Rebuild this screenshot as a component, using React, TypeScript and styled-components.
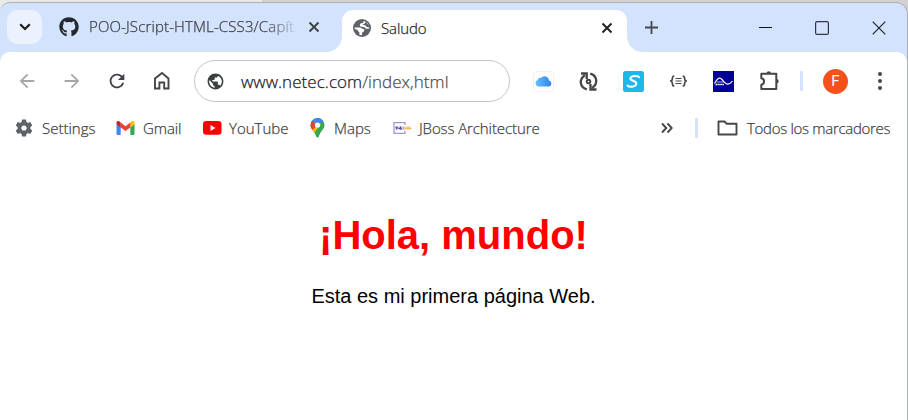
import React from "react";
import styled, { createGlobalStyle } from "styled-components";
import { MdPublic, MdRefresh, MdArrowBack, MdArrowForward } from "react-icons/md";
import { FaGithub } from "react-icons/fa";

const Global = createGlobalStyle`
  * { box-sizing: border-box; }
  html, body { margin: 0; background: #d2d2d2; overflow: hidden; }
  h1, p { margin: 0; }
  svg { display: block; flex: none; }
`;
const uiFont = `"Open Sans", "Noto Sans", sans-serif`;

const Desktop = styled.div`
  height: 420px;
  padding-top: 2px;
  overflow: hidden;
  background: linear-gradient(90deg, #e9e9e9 0 262px, #d2d2d2 262px);
`;
const Window = styled.div`
  height: 426px;
  width: 908px;
  border: 1px solid #aeb0b3;
  border-left-width: 0;
  border-radius: 10px 12px 0 0;
  background: #d3e2fd;
  overflow: hidden;
`;
const TabStrip = styled.div`
  height: 49px;
  padding-top: 7px;
  display: flex;
`;
const SearchTabs = styled.div`
  width: 35px;
  height: 34px;
  margin-left: 7px;
  border-radius: 11px;
  background: #ebf2fe;
  display: grid;
  place-items: center;
`;
const Label = styled.span<{ $size?: number; $track?: number; $color?: string }>`
  font-family: ${uiFont};
  font-weight: 300;
  font-size: ${p => p.$size ?? 15}px;
  letter-spacing: ${p => p.$track ?? 0}px;
  color: ${p => p.$color ?? "#3c3f43"};
  -webkit-text-stroke: 0.25px currentColor;
  line-height: 22px;
  white-space: nowrap;
`;
const IdleTab = styled.div`
  width: 300px;
  height: 34px;
  padding-left: 17px;
  display: flex;
  align-items: center;
`;
const TabTitle = styled.div`
  width: 208px;
  margin: 0 0 2px 10px;
  display: flex;
  mask-image: linear-gradient(90deg, #000 178px, transparent 210px);
`;
const CloseIdle = styled.div`
  margin-left: 11px;
`;
const ActiveTab = styled.div`
  width: 285px;
  height: 42px;
  padding: 0 14px 7px 11px;
  border-radius: 11px 11px 0 0;
  background: #fff;
  display: flex;
  align-items: center;
  gap: 10px;
  position: relative;
  &::before, &::after {
    content: "";
    position: absolute;
    bottom: 0;
    width: 15px;
    height: 15px;
  }
  &::before { left: -15px; background: radial-gradient(circle at 0 0, transparent 14.5px, #fff 15px); }
  &::after { right: -15px; background: radial-gradient(circle at 100% 0, transparent 14.5px, #fff 15px); }
`;
const Spacer = styled.div`
  flex: 1;
`;
const NewTab = styled.div`
  margin: 11px 0 0 18px;
`;
const WindowControls = styled.div`
  display: flex;
  gap: 43px;
  margin: 11px 21px 0 auto;
`;
const Sheet = styled.div`
  height: 375px;
  border-radius: 10px 10px 0 0;
  background: #fff;
`;
const Toolbar = styled.div`
  height: 58px;
  padding-left: 16px;
  display: flex;
  align-items: center;
`;
const NavButtons = styled.div`
  display: flex;
  gap: 23px;
  width: 178px;
`;
const Omnibox = styled.div`
  width: 316px;
  height: 42px;
  border: 1px solid #c3c5c8;
  border-radius: 21px;
  padding-left: 11px;
  display: flex;
  align-items: center;
  gap: 16px;
`;
const Address = styled.div`
  padding-top: 2px;
`;
const Extensions = styled.div`
  margin-left: 11px;
  display: grid;
  grid-template-columns: repeat(6, 45px) 21px 47px 42px;
  place-items: center;
`;
const Divider = styled.div`
  width: 3px;
  height: 20px;
  background: #d3e2fd;
  border-radius: 1px;
`;
const Avatar = styled.div`
  width: 25px;
  height: 25px;
  border-radius: 50%;
  background: #f6511d;
  color: #fff;
  font: 15px/25px Roboto, sans-serif;
  text-align: center;
`;
const Bookmarks = styled.div`
  height: 36px;
  padding: 0 16px 1px 15px;
  display: flex;
  align-items: center;
`;
const Bookmark = styled.div<{ $w: number; $gap?: number }>`
  width: ${p => p.$w}px;
  display: flex;
  align-items: center;
  gap: ${p => p.$gap ?? 8}px;
`;
const Overflow = styled.div`
  width: 34px;
`;
const AllBookmarks = styled.div`
  width: 174px;
  margin-left: 19px;
  display: flex;
  align-items: center;
  gap: 9px;
`;
const Page = styled.main`
  padding-top: 66px;
  display: flex;
  flex-direction: column;
  align-items: center;
  font-family: Arial, "Liberation Sans", sans-serif;
`;
const Heading = styled.h1`
  font-size: 40px;
  line-height: 46px;
  color: #f00;
`;
const Paragraph = styled.p`
  margin-top: 27px;
  font-size: 20px;
  line-height: 23px;
  color: #000;
`;

const ink = "#444649";

const Cross = ({ color, w }: { color: string; w: number }) => (
  <svg width="12" height="12" viewBox="0 0 12 12" stroke={color} strokeWidth={w} fill="none"><path d="M1.5 1.5l9 9m0-9l-9 9" /></svg>
);

const PageGlobe = () => (
  <svg width="18" height="18" viewBox="0 0 18 18">
    <circle cx="9" cy="9" r="9" fill="#5f6368" />
    <path d="M10.500 1.900a7.300 7.300 0 0 1 5.700 6.600l-.2 1.300h-2.300c-1.500 0-1.400-1.700-2.900-1.900l-2.600-.2c-1.500-.3-1.800-2.100-.8-3 .8-.7 2.400-.2 2.900-1.100.3-.5-.1-1.100.2-1.700z" fill="#fff" />
    <path d="M12.600 2.600l3.500 4.200.3 1.600-2.200-.3c-1.200-.2-1-1.300-2.100-1.800l-2.400-.5c.3-1 2.700-.6 2.900-3.200z" fill="#5f6368" />
    <path d="M1.700 8.600h5.100c1.700 0 1.900 1.300 3.400 1.400 1.200.1 1.500 1.200.8 2.200-.5.700-1.600.7-1.800 1.500l-.3 2.500a7.300 7.300 0 0 1-2.600-.5l.1-2.100c0-1-1.300-.9-1.500-1.900-.1-1.100-2.100-1.300-3.200-1.600z" fill="#fff" />
  </svg>
);

const Home = () => (
  <svg width="22" height="22" viewBox="0 0 22 22" fill="none" stroke={ink} strokeWidth="1.900"><path d="M4 18.500V8.500L11 3l6.500 5.500v10h-4.300v-6H8.400v6z" /></svg>
);

const Gear = () => (
  <svg width="18" height="18" viewBox="-9 -9 18 18" fill="#5f6368">
    <circle r="4.500" fill="none" stroke="#5f6368" strokeWidth="3.800" />
    {[0, 60, 120, 180, 240, 300].map(a => <path key={a} d="M-2.600-5l.6-3.400h4l.6 3.400z" transform={`rotate(${a})`} />)}
  </svg>
);

const Gmail = () => (
  <svg width="19" height="14" viewBox="0 0 19 14">
    <path d="M.5 3v9.700q0 1.300 1.300 1.300h2.900V6z" fill="#4285f4" />
    <path d="M14.300 14h2.900q1.300 0 1.300-1.300V3l-4.200 3z" fill="#34a853" />
    <path d="M14.300 1.500V6.500l4.200-3.200V2c0-2-2-2.500-3.300-1.300z" fill="#fbbc04" />
    <path d="M4.700 6.500v-5l4.800 3.700 4.800-3.700v5l-4.800 3.600z" fill="#ea4335" />
    <path d="M.5 2v1.300l4.200 3.200v-5L3.800.7C2.500-.5.5 0 .5 2z" fill="#c5221f" />
  </svg>
);

const YouTube = () => (
  <svg width="19" height="14" viewBox="0 0 19 14"><rect width="18.500" height="13.800" rx="3.300" fill="#f00" /><path d="M7.500 4v6l5-3z" fill="#fff" /></svg>
);

const MapPin = () => (
  <svg width="15" height="20" viewBox="0 0 15 20">
    <defs><clipPath id="pin"><path d="M7.500 0A7 7 0 0 0 .5 7c0 3.500 2.500 5 4.200 8 1.300 2.300 1.400 4.600 2.800 4.600s1.500-2.300 2.800-4.600c1.700-3 4.200-4.500 4.200-8a7 7 0 0 0-7-7z" /></clipPath></defs>
    <g clipPath="url(#pin)">
      <path d="M0 0h15v20H0z" fill="#34a853" />
      <path d="M0 9l6-6 5 3.500L3 16H-1z" fill="#fbbc04" />
      <path d="M-1 1l8.500 6L2 12.500l-3-2z" fill="#ea4335" />
      <path d="M2 2L7.500 7.500 14.500 2 10-2z" fill="#4285f4" />
    </g>
    <circle cx="7.500" cy="7" r="2.600" fill="#fff" />
  </svg>
);

const TekData = () => (
  <svg width="19" height="14" viewBox="0 0 19 14" fill="none">
    <path d="M12 4V1.600H1v10.700h11V9.800" stroke="#9a9bd3" strokeWidth="1.300" />
    <path d="M2.500 7h7" stroke="#b4b5de" strokeWidth="3" />
    <path d="M2.500 6.200h2.200M3.600 6v2.500M5.500 7.500h1.500M7.500 5.500v3M8 7.500l1.300 1" stroke="#4547a3" />
    <path d="M9.800 7h8.500" stroke="#fbd3a4" strokeWidth="2.800" />
    <path d="M10.500 5.700v2.800M12.500 7.500h1.200M15 6v2.500M16.500 7.500h1.500" stroke="#f0a04b" />
  </svg>
);

const Folder = () => (
  <svg width="21" height="16" viewBox="0 0 21 16" fill="none" stroke={ink} strokeWidth="1.900" strokeLinejoin="round"><path d="M1.500 1.500h6l2 2.200h10v10.800h-18z" /></svg>
);

const CloudExt = () => (
  <svg width="21" height="21" viewBox="0 0 21 21">
    <defs><linearGradient id="sky"><stop stopColor="#69c0fb" /><stop offset="1" stopColor="#2b83ef" /></linearGradient></defs>
    <rect x=".5" y=".5" width="20" height="20" rx="3" fill="#fff" stroke="#eef0f2" />
    <path d="M5.500 15.500a3.300 3.300 0 0 1-.8-6.400 2.400 2.400 0 0 1 3.200-2.200 4.500 4.500 0 0 1 8 2.500 3.100 3.100 0 0 1-.2 6.100z" fill="url(#sky)" />
  </svg>
);

const SyncExt = () => (
  <svg width="21" height="21" viewBox="0 0 21 21" fill="none" stroke={ink} strokeWidth="2.300">
    <circle cx="10.500" cy="10.500" r="1.800" strokeWidth="1.900" />
    <path d="M8.800 18.400C1.800 16.500.6 8.500 6.800 4.200M3 2.500h5.700V8M12.200 2.600c7 1.900 8.200 9.900 2 14.200M18.500 18.500h-6V13" />
  </svg>
);

const ScriptExt = () => (
  <svg width="21" height="21" viewBox="0 0 21 21" fill="none"><rect width="21" height="21" rx="2.500" fill="#1cb7eb" /><path d="M16 6.300C15.500 4.500 8 4.300 7.300 7.400 6.800 10 14.300 9.700 13.300 13c-1 3.400-7.500 3.400-8.700 1.600" stroke="#fff" strokeWidth="2" strokeLinecap="round" /></svg>
);

const JsonExt = () => (
  <svg width="17" height="12" viewBox="0 0 17 12" fill="none" stroke={ink}>
    <path d="M4.300 1C2.500 1 2.500 1.500 2.500 3s0 2.500-1.800 3C2.500 6.500 2.500 7.500 2.500 9s0 2 1.800 2M12.700 1c1.800 0 1.800.5 1.800 2s0 2.500 1.800 3c-1.800.5-1.800 1.500-1.800 3s0 2-1.800 2" strokeWidth="1.700" />
    <path d="M5.500 3.500h6M5.500 6h6M5.500 8.500h6" strokeWidth="1.200" />
  </svg>
);

const WaveExt = () => (
  <svg width="21" height="21" viewBox="0 0 21 21" fill="none" stroke="#fff"><rect width="21" height="21" fill="#000099" stroke="none" /><path d="M1.500 12.500C4 7.500 6.500 5.500 9 8.500s5.500 8 10.500 1.500" strokeWidth="1.200" /><path d="M2.500 13.500h8.500" strokeWidth="1.300" strokeDasharray="1.500 .4" /><path d="M3.500 11h7" strokeWidth=".7" /></svg>
);

const Puzzle = () => (
  <svg width="22" height="22" viewBox="0 0 22 22" fill="none" stroke={ink} strokeWidth="2" strokeLinejoin="round">
    <path d="M3.300 3.800h15v15.200h-15v-4.300a3.300 3.300 0 0 0 0-6.500z" />
    <path d="M8.500 3.500a2.200 2.200 0 0 1 4.400 0zM18.500 9.100a2.200 2.200 0 0 1 0 4.400z" fill={ink} stroke="none" />
  </svg>
);

const Menu = () => (
  <svg width="6" height="20" viewBox="0 0 6 20" fill={ink}><circle cx="3" cy="3" r="2" /><circle cx="3" cy="10" r="2" /><circle cx="3" cy="17" r="2" /></svg>
);

export default function App() {
  return (
    <Desktop>
      <Global />
      <Window>
        <TabStrip>
          <SearchTabs><svg width="12" height="8" viewBox="0 0 12 8" fill="none" stroke="#1f1f1f" strokeWidth="2.2"><path d="M1.2 1.2L6 6l4.800-4.800" /></svg></SearchTabs>
          <IdleTab>
            <FaGithub size={20} color="#24292f" />
            <TabTitle><Label $track={0.13}>POO-JScript-HTML-CSS3/Capít</Label></TabTitle>
            <CloseIdle><Cross color="#3c4043" w={1.8} /></CloseIdle>
          </IdleTab>
          <ActiveTab>
            <PageGlobe />
            <Label $color="#1f1f1f" $track={-0.1}>Saludo</Label>
            <Spacer />
            <Cross color="#1f1f1f" w={1.9} />
          </ActiveTab>
          <NewTab><svg width="13" height="13" viewBox="0 0 13 13" stroke="#44474c" strokeWidth="1.8"><path d="M0 6.500h13M6.500 0v13" /></svg></NewTab>
          <WindowControls>
            <svg width="14" height="14" viewBox="0 0 14 14" stroke="#111"><path d="M1 6.500h13" /></svg>
            <svg width="14" height="14" viewBox="0 0 14 14" fill="none" stroke="#303640" strokeWidth="1.200"><rect x=".6" y=".6" width="12.800" height="12.800" rx="1.500" /></svg>
            <svg width="14" height="14" viewBox="0 0 14 14" stroke="#1f2329" strokeWidth="1.200"><path d="M.7.7l12.600 12.600m0-12.600L.7 13.300" /></svg>
          </WindowControls>
        </TabStrip>
        <Sheet>
          <Toolbar>
            <NavButtons>
              <MdArrowBack size={22} color="#a4a6a9" /><MdArrowForward size={22} color="#a4a6a9" />
              <MdRefresh size={22} color="#3f4246" /><Home />
            </NavButtons>
            <Omnibox>
              <MdPublic size={19} color="#3c4043" />
              <Address>
                <Label $size={17} $track={0.05} $color="#202124">www.netec.com</Label>
                <Label $size={17} $track={0.05} $color="#4b4f54">/index,html</Label>
              </Address>
            </Omnibox>
            <Extensions>
              <CloudExt /><SyncExt /><ScriptExt /><JsonExt /><WaveExt /><Puzzle />
              <Divider /><Avatar>F</Avatar><Menu />
            </Extensions>
          </Toolbar>
          <Bookmarks>
            <Bookmark $w={101} $gap={9}><Gear /><Label>Settings</Label></Bookmark>
            <Bookmark $w={87}><Gmail /><Label $track={-0.1}>Gmail</Label></Bookmark>
            <Bookmark $w={107} $gap={7}><YouTube /><Label>YouTube</Label></Bookmark>
            <Bookmark $w={83} $gap={9}><MapPin /><Label>Maps</Label></Bookmark>
            <Bookmark $w={160} $gap={7}><TekData /><Label $track={-0.1}>JBoss Architecture</Label></Bookmark>
            <Spacer />
            <Overflow><svg width="12" height="12" viewBox="0 0 12 12" fill="none" stroke={ink} strokeWidth="1.900"><path d="M1 1.500L5.300 6 1 10.500M6.500 1.500L10.800 6l-4.300 4.500" /></svg></Overflow>
            <Divider />
            <AllBookmarks><Folder /><Label $track={-0.3}>Todos los marcadores</Label></AllBookmarks>
          </Bookmarks>
          <Page>
            <Heading>¡Hola, mundo!</Heading>
            <Paragraph>Esta es mi primera página Web.</Paragraph>
          </Page>
        </Sheet>
      </Window>
    </Desktop>
  );
}
